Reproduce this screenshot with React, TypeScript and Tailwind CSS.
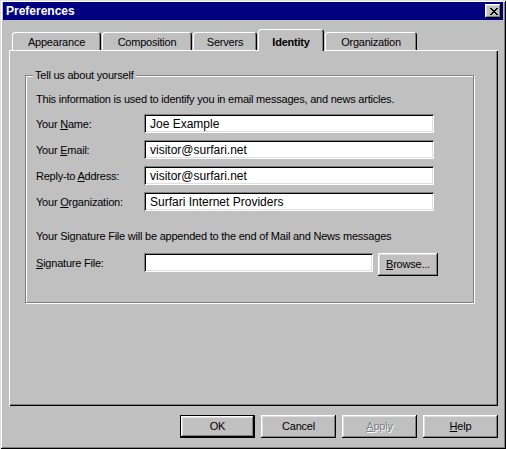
import React from 'react';

// win95 bevels
const raised =
  'shadow-[inset_-1px_-1px_0_#000000,inset_1px_1px_0_#ffffff,inset_-2px_-2px_0_#808080,inset_2px_2px_0_#dfdfdf]';
const sunken =
  'shadow-[inset_1px_1px_0_#808080,inset_-1px_-1px_0_#ffffff,inset_2px_2px_0_#000000,inset_-2px_-2px_0_#dfdfdf]';

function CloseGlyph() {
  // 8x7 pixel X
  const rows = ['XX....XX', '.XX..XX.', '..XXXX..', '...XX...', '..XXXX..', '.XX..XX.', 'XX....XX'];
  return (
    <svg width="8" height="7" viewBox="0 0 8 7" shapeRendering="crispEdges">
      {rows.map((r, y) =>
        r.split('').map((c, x) => (c === 'X' ? <rect key={`${x}-${y}`} x={x} y={y} width="1" height="1" fill="#000" /> : null))
      )}
    </svg>
  );
}

function Tab({ label, width, selected }: { label: string; width: string; selected?: boolean }) {
  if (selected) {
    return (
      <div
        className={`relative z-10 -mb-[1px] h-[22px] ${width} rounded-t-[3px] bg-[#c0c0c0] pt-[4px] flex items-center justify-center font-bold shadow-[inset_1px_1px_0_#ffffff,inset_-1px_0_0_#000000,inset_-2px_0_0_#808080]`}
      >
        {label}
      </div>
    );
  }
  return (
    <div
      className={`h-[18px] ${width} rounded-t-[3px] bg-[#c0c0c0] pt-[2px] flex items-center justify-center shadow-[inset_1px_1px_0_#ffffff,inset_-1px_0_0_#000000,inset_-2px_0_0_#808080]`}
    >
      {label}
    </div>
  );
}

function Field({ value, width }: { value: string; width: string }) {
  return (
    <div
      className={`h-[19px] ${width} bg-white ${sunken} pl-[6px] pt-[1px] flex items-center whitespace-nowrap text-[12px] tracking-normal`}
    >
      {value}
    </div>
  );
}

function Row({ label, value }: { label: React.ReactNode; value: string }) {
  return (
    <div className="flex items-center h-[19px]">
      <div className="w-[108px] pt-[2px]">{label}</div>
      <Field value={value} width="w-[290px]" />
    </div>
  );
}

function Button({ children, isDefault, disabled }: { children: React.ReactNode; isDefault?: boolean; disabled?: boolean }) {
  return (
    <div
      className={`w-[75px] h-[23px] flex items-center justify-center bg-[#c0c0c0] ${
        isDefault ? 'border border-black' : ''
      } ${disabled ? 'text-[#808080] [text-shadow:1px_1px_0_#ffffff]' : 'text-black'}`}
    >
      <div className={`w-full h-full flex items-center justify-center ${raised}`}>{children}</div>
    </div>
  );
}

export default function App() {
  return (
    <div className="w-[506px] h-[449px] bg-[#c0c0c0] text-[11px] leading-[13px] tracking-[-0.22px] text-black font-['Liberation_Sans',Arial,sans-serif] shadow-[inset_1px_1px_0_#dfdfdf,inset_-1px_-1px_0_#000000,inset_2px_2px_0_#ffffff,inset_-2px_-2px_0_#808080] pt-[2px] flex flex-col">
      {/* title bar */}
      <div className="mx-[3px] h-[18px] bg-[#000080] flex items-center justify-between pl-[3px] pr-[2px]">
        <span className="text-white font-bold text-[12px] leading-none tracking-normal">Preferences</span>
        <div className={`w-[16px] h-[14px] bg-[#c0c0c0] ${raised} flex items-center justify-center pl-[1px]`}>
          <CloseGlyph />
        </div>
      </div>

      {/* tabs */}
      <div className="ml-[12px] mt-[9px] h-[21px] flex items-end gap-[1px]">
        <Tab label="Appearance" width="w-[89px]" />
        <Tab label="Composition" width="w-[90px]" />
        <Tab label="Servers" width="w-[64px]" />
        <Tab label="Identity" width="w-[66px]" selected />
        <Tab label="Organization" width="w-[92px]" />
      </div>

      {/* tab page */}
      <div className="ml-[9px] mr-[8px] h-[356px] shadow-[inset_1px_1px_0_#ffffff,inset_-1px_-1px_0_#000000,inset_-2px_-2px_0_#808080] pt-[25px] pl-[16px]">
        <div className="relative w-[449px] h-[228px] border border-[#808080] shadow-[1px_1px_0_#ffffff,inset_1px_1px_0_#ffffff]">
          <span className="absolute -top-[7px] left-[7px] bg-[#c0c0c0] px-[2px]">Tell us about yourself</span>

          <div className="pl-[10px] pt-[17px] flex flex-col">
            <div>This information is used to identify you in email messages, and news articles.</div>

            <div className="mt-[8px] flex flex-col gap-[7px]">
              <Row
                label={
                  <>
                    Your <u>N</u>ame:
                  </>
                }
                value="Joe Example"
              />
              <Row
                label={
                  <>
                    Your <u>E</u>mail:
                  </>
                }
                value="visitor@surfari.net"
              />
              <Row
                label={
                  <>
                    Reply-to <u>A</u>ddress:
                  </>
                }
                value="visitor@surfari.net"
              />
              <Row
                label={
                  <>
                    Your <u>O</u>rganization:
                  </>
                }
                value="Surfari Internet Providers"
              />
            </div>

            <div className="mt-[19px]">Your Signature File will be appended to the end of Mail and News messages</div>

            <div className="mt-[10px] flex items-start">
              <div className="w-[108px] h-[19px] flex items-center pt-[2px]">
                <span>
                  <u>S</u>ignature File:
                </span>
              </div>
              <Field value="" width="w-[229px]" />
              <div className={`ml-[5px] w-[60px] h-[23px] bg-[#c0c0c0] ${raised} flex items-center justify-center`}>
                <span>
                  <u>B</u>rowse...
                </span>
              </div>
            </div>
          </div>
        </div>
      </div>

      {/* dialog buttons */}
      <div className="mt-[9px] mr-[8px] flex justify-end gap-[6px]">
        <Button isDefault>OK</Button>
        <Button>Cancel</Button>
        <Button disabled>
          <span>
            <u>A</u>pply
          </span>
        </Button>
        <Button>
          <span>
            <u>H</u>elp
          </span>
        </Button>
      </div>
    </div>
  );
}
